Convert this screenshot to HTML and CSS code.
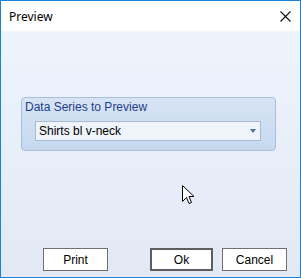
FILE: index.html
```html
<!DOCTYPE html>
<html lang="en">
<head>
    <meta charset="UTF-8">
    <title>Preview</title>
    <link rel="stylesheet" href="styles.css">
</head>
<body>
    <div class="window">
        <div class="titlebar">
            <span class="title">Preview</span>
            <svg class="close" width="11" height="11" viewBox="0 0 11 11">
                <path d="M0.5 0.5 L10.5 10.5 M10.5 0.5 L0.5 10.5" stroke="#111" stroke-width="1.1" fill="none"/>
            </svg>
        </div>
        <div class="client">
            <!-- group box -->
            <div class="group">
                <div class="group-header">Data Series to Preview</div>
                <div class="combo">
                    <span>Shirts bl v-neck</span>
                    <span class="arrow"></span>
                </div>
            </div>

            <div class="buttons">
                <button class="btn">Print</button>
                <span class="spacer"></span>
                <button class="btn btn-default">Ok</button>
                <button class="btn">Cancel</button>
            </div>

            <svg class="cursor" width="13" height="20" viewBox="0 0 13 20">
                <path d="M0.5 0.5 L0.5 16.5 L4.5 12.5 L7 18.5 L9.5 17.5 L7 11.5 L12 11.5 Z" fill="#fff" stroke="#000" stroke-width="1"/>
            </svg>
        </div>
    </div>
</body>
</html>
```

FILE: styles.css
```css
body {
    margin: 0;
    font-family: "Liberation Sans", Arial, sans-serif;
    font-size: 12px;
}
.window {
    width: 301px;
    height: 278px;
    box-sizing: border-box;
    border: 1px solid #1883d7;
    display: flex;
    flex-direction: column;
}
.titlebar {
    height: 30px;
    background: #fff;
    display: flex;
    align-items: center;
    justify-content: space-between;
    padding: 0 9px 0 8px;
}
.title {
    font-family: "Noto Sans", sans-serif;
    font-size: 12px;
    color: #000;
}
.close {
    margin-top: 1px;
}
.client {
    position: relative;
    flex: 1;
    background: linear-gradient(#eef4fc, #e2e9f5);
    display: flex;
    flex-direction: column;
    padding: 66px 12px 6px 20px;
}
.group {
    width: 255px;
    height: 54px;
    box-sizing: border-box;
    border: 1px solid #a8bedb;
    border-radius: 4px;
    background: linear-gradient(#d6e4f5, #c6d9ef);
}
.group-header {
    color: #1f3d86;
    padding: 2px 0 0 3px;
    height: 20px;
    box-sizing: border-box;
}
.combo {
    margin: 3px 14px 0 13px;
    height: 20px;
    box-sizing: border-box;
    border: 1px solid #a7bad3;
    background: #eff4fb;
    display: flex;
    align-items: center;
    justify-content: space-between;
    padding: 0 4px 0 3px;
    color: #000;
}
.arrow {
    width: 0;
    height: 0;
    border-left: 3.5px solid transparent;
    border-right: 3.5px solid transparent;
    border-top: 4px solid #4a6fa8;
}
.buttons {
    margin-top: auto;
    display: flex;
    align-items: center;
    gap: 9px;
    padding-left: 22px;
}
.spacer {
    width: 24px;
}
.btn {
    width: 65px;
    height: 23px;
    box-sizing: border-box;
    background: #fff;
    border: 1px solid #707070;
    font-family: "Liberation Sans", Arial, sans-serif;
    font-size: 12px;
    color: #000;
    padding: 0;
}
.btn-default {
    width: 63px;
    border: 2px solid #5e5e5e;
}
.cursor {
    position: absolute;
    left: 181px;
    top: 154px;
}
```
